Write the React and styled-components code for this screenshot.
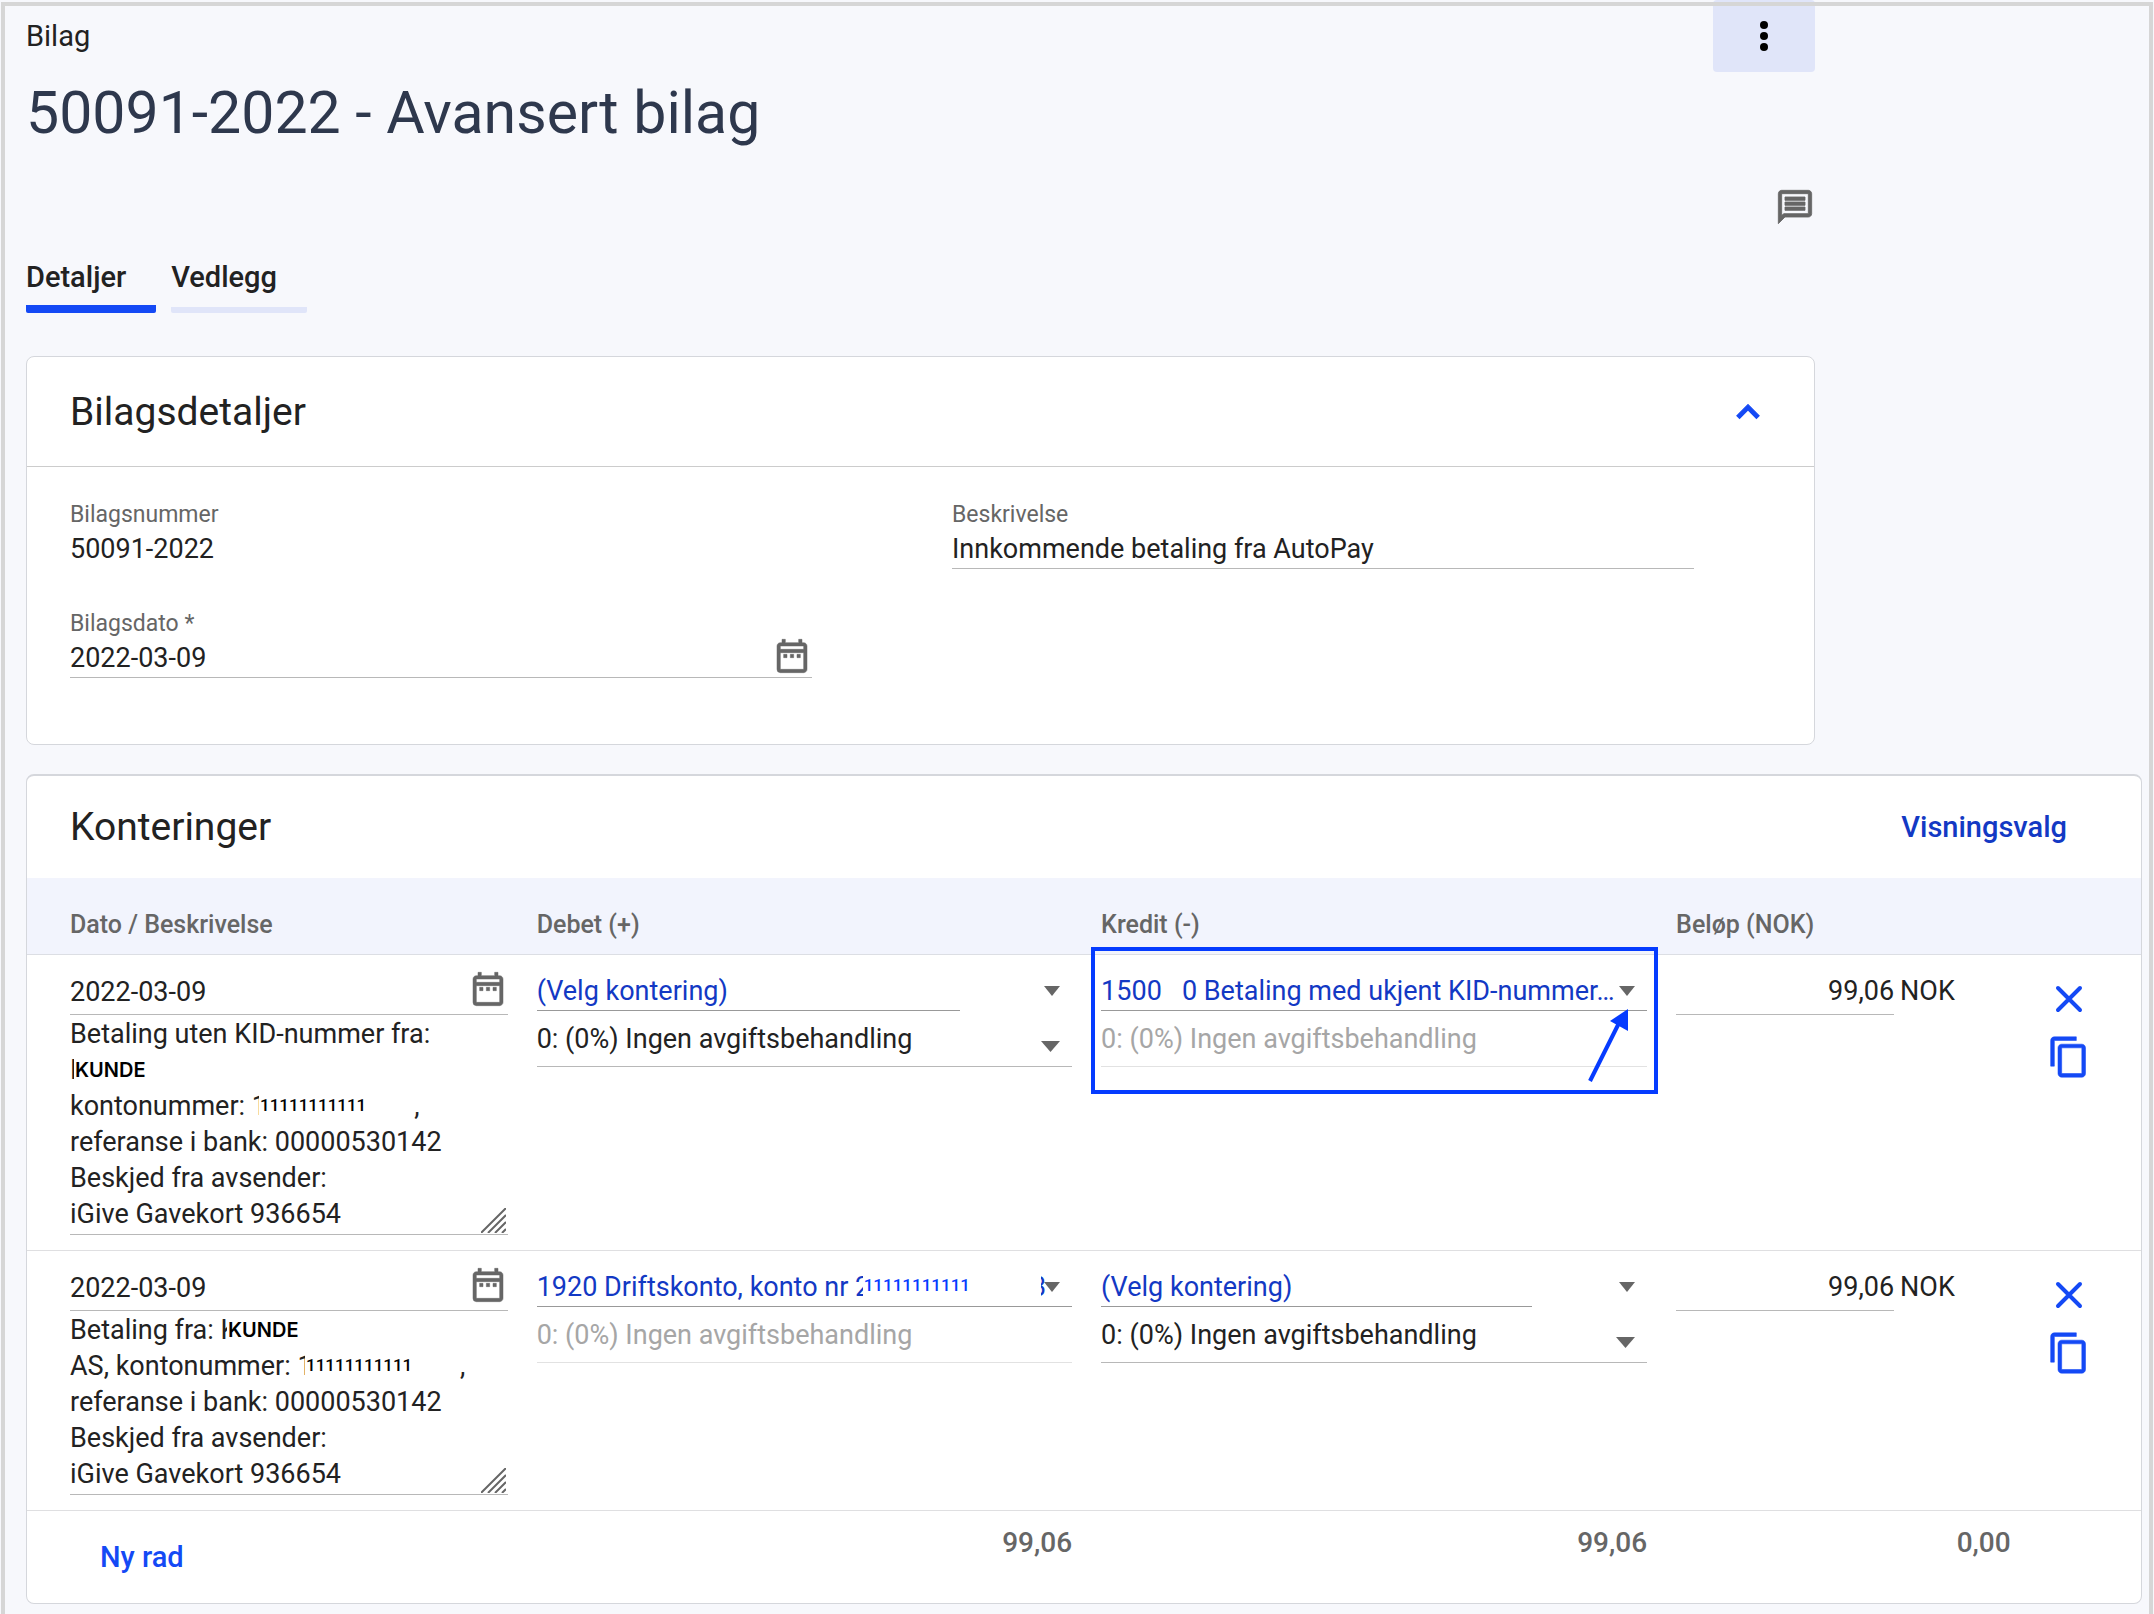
import { useState } from "react";
import styled, { createGlobalStyle, css } from "styled-components";
import {
    MdContentCopy,
    MdKeyboardArrowUp,
    MdOutlineDateRange,
    MdOutlineMessage,
} from "react-icons/md";

const GlobalStyle = createGlobalStyle`
    *, *::before, *::after {
        box-sizing: border-box;
    }
    body {
        margin: 0;
        background: #f7f8fc;
        color: #222;
        font-family: Roboto, "Liberation Sans", sans-serif;
        font-size: 27px;
    }
    button, input, select, textarea {
        margin: 0;
        padding: 0;
        border: 0;
        border-radius: 0;
        outline: 0;
        background: none;
        color: inherit;
        font: inherit;
    }
    button, select {
        cursor: pointer;
    }
`

const Page = styled.div`
    position: relative;
    min-height: 100vh;
    padding: 0 12px 9px 26px;
    &::after {
        content: "";
        position: absolute;
        inset: 2px 1px 0;
        border: 4px solid #d6d6d6;
        border-bottom: 0;
        pointer-events: none;
    }
`

const Column = styled.div`
    max-width: 1789px;
`

const Header = styled.header`
    display: flex;
    justify-content: space-between;
    align-items: flex-start;
`

const Heading = styled.div`
    padding-top: 18px;
`

const Crumb = styled.div`
    font-size: 29px;
    line-height: 36px;
`

const Title = styled.h1`
    margin: 27px 0 0;
    color: #2e384d;
    font-size: 59px;
    font-weight: 400;
    line-height: 64px;
`

const MenuButton = styled.button`
    width: 102px;
    height: 72px;
    border-radius: 4px;
    background: #e0e5f9;
    svg {
        display: block;
        margin: 0 auto;
    }
`

const Toolbar = styled.div`
    display: flex;
    justify-content: flex-end;
    margin-top: 42px;
`

const IconButton = styled.button`
    display: flex;
    color: ${(p) => (p.$blue ? "#1449f5" : "#666")};
    path[fill="none"] {
        stroke: none;
    }
`

const Tabs = styled.nav`
    display: flex;
    align-items: flex-start;
    gap: 15px;
    margin-top: 32px;
`

const Tab = styled.button`
    padding: 0 30px ${(p) => (p.$active ? 10 : 12)}px 0;
    border-bottom: ${(p) => (p.$active ? "8px solid #1449f5" : "6px solid #e0e5f9")};
    border-radius: 2px;
    font-size: 29px;
    font-weight: 500;
    line-height: 36px;
`

const Card = styled.section`
    margin-top: ${(p) => (p.$wide ? 29 : 43)}px;
    border: 1px solid #d5d7dc;
    border-top-width: ${(p) => (p.$wide ? 2 : 1)}px;
    border-radius: 8px;
    background: #fff;
    overflow: hidden;
`

const CardHeader = styled.div`
    display: flex;
    align-items: center;
    justify-content: space-between;
    height: ${(p) => (p.$line ? 110 : 102)}px;
    padding: 0 ${(p) => (p.$line ? 44 : 74)}px 0 43px;
    border-bottom: ${(p) => (p.$line ? "1px solid #ccc" : 0)};
`

const CardTitle = styled.h2`
    margin: 0;
    font-size: 39px;
    font-weight: 400;
    line-height: 44px;
`

const Fields = styled.div`
    display: grid;
    grid-template-columns: 1fr 1fr;
    gap: 41px 140px;
    padding: 34px 120px 66px 43px;
`

const Field = styled.div`
    display: flex;
    flex-direction: column;
`

const Label = styled.label`
    color: #666;
    font-size: 23px;
    line-height: 28px;
`

const Control = styled.div`
    display: flex;
    align-items: center;
    height: ${(p) => (p.$tall ? 48 : 40)}px;
    border-bottom: 1px solid ${(p) => (p.$plain ? "transparent" : "#b8b8b8")};
    input, output {
        flex: 1;
        min-width: 0;
        padding-top: ${(p) => (p.$tall ? 2 : 0)}px;
        line-height: 36px;
    }
    button {
        margin-bottom: 4px;
    }
`

const TextButton = styled.button`
    color: ${(p) => (p.$dark ? "#1339c4" : "#1449f5")};
    font-size: 29px;
    font-weight: 500;
    line-height: 36px;
`

const Table = styled.table`
    width: 100%;
    border-collapse: separate;
    border-spacing: 0;
    table-layout: fixed;
    th, td {
        padding: 12px 14px 15px 15px;
        text-align: left;
        vertical-align: top;
    }
    th:first-child, td:first-child {
        padding-left: 43px;
    }
    th {
        padding-top: 31px;
        padding-bottom: 13px;
        border-bottom: 1px solid #dcdee4;
        background: #f2f4fd;
        color: #666;
        font-size: 25px;
        font-weight: 500;
        line-height: 32px;
    }
    tbody td {
        position: relative;
        border-bottom: 1px solid #dfdfe1;
    }
    tfoot td {
        height: 92px;
        padding-top: 14px;
        color: #666;
        font-size: 28px;
        font-weight: 500;
        line-height: 36px;
        text-align: right;
    }
    tfoot td:first-child {
        padding-top: 28px;
        padding-left: 73px;
        text-align: left;
    }
`

const Description = styled.div`
    position: relative;
    textarea {
        display: block;
        width: 100%;
        padding: 1px 0 2px;
        box-sizing: content-box;
        border-bottom: 1px solid #b8b8b8;
        line-height: 36px;
        overflow: hidden;
        resize: none;
    }
`

const Grip = styled.svg`
    position: absolute;
    right: 2px;
    bottom: 2px;
    stroke: #666;
    stroke-width: 2;
`

// white strip with replacement text, laid over private data
const Patch = styled.span`
    position: absolute;
    top: ${(p) => p.$top}px;
    left: ${(p) => p.$left}px;
    width: ${(p) => (p.$width ? p.$width + "px" : "auto")};
    padding-left: 1px;
    background: #fff;
    color: ${(p) => (p.$blue ? "#053bff" : "#000")};
    font-size: 17px;
    font-weight: 500;
    line-height: 30px;
    ${(p) => p.$name && css`
        font-family: Inter, "Liberation Sans", sans-serif;
        font-size: 20px;
        font-weight: 600;
    `}
`

const Picker = styled.div`
    position: relative;
    height: ${(p) => (p.$vat ? 56 : 44)}px;
    select {
        display: block;
        width: ${(p) => (p.$short ? "79%" : "100%")};
        height: 100%;
        padding-top: ${(p) => (p.$vat ? 1 : 4)}px;
        border-bottom: 1px solid #999;
        color: #1339c4;
        appearance: none;
        opacity: 1;
        ${(p) => p.$vat && css`
            color: #222;
            border-color: #b8b8b8;
        `}
        &:disabled {
            color: #a6a6a6;
            border-color: #e2e2e2;
        }
    }
`

const Caret = styled.svg`
    position: absolute;
    top: ${(p) => (p.$vat ? 30 : 19)}px;
    right: 12px;
    fill: #666;
    pointer-events: none;
`

const Amount = styled.div`
    display: flex;
    gap: 6px;
    line-height: 49px;
    input {
        width: 218px;
        height: 48px;
        padding-top: 2px;
        border-bottom: 1px solid #b8b8b8;
        text-align: right;
    }
`

const Actions = styled.div`
    display: flex;
    flex-direction: column;
    align-items: center;
    gap: 14px;
    padding: 10px 28px 0 0;
`

const Marker = styled.svg`
    position: absolute;
    top: -8px;
    left: 5px;
    z-index: 1;
    width: calc(100% - 8px);
    height: 147px;
    border: 4px solid #053bff;
    overflow: visible;
    pointer-events: none;
`

const VAT = "0: (0%) Ingen avgiftsbehandling"
const NONE = "(Velg kontering)"

const ROWS = [
    {
        id: "r1",
        date: "2022-03-09",
        text: [
            "Betaling uten KID-nummer fra:",
            "K",
            "kontonummer: 1" + " ".repeat(22) + ",",
            "referanse i bank: 00000530142",
            "Beskjed fra avsender:",
            "iGive Gavekort 936654",
        ],
        patches: [
            { top: 40, left: 4, label: "KUNDE", name: true },
            { top: 75, left: 189, label: "11111111111" },
        ],
        debit: { account: NONE },
        credit: {
            account: "1500\u00a0\u00a0\u00a00 Betaling med ukjent KID-nummer…",
            marked: true,
        },
        amount: "99,06",
    },
    {
        id: "r2",
        date: "2022-03-09",
        text: [
            "Betaling fra: K",
            "AS, kontonummer: 1" + " ".repeat(22) + ",",
            "referanse i bank: 00000530142",
            "Beskjed fra avsender:",
            "iGive Gavekort 936654",
        ],
        patches: [
            { top: 4, left: 157, label: "KUNDE", name: true },
            { top: 39, left: 235, label: "11111111111" },
        ],
        debit: {
            account: "1920 Driftskonto, konto nr 2" + "\u00a0".repeat(24) + "3",
            patch: { top: 7, left: 326, width: 178, label: "11111111111" },
        },
        credit: { account: NONE },
        amount: "99,06",
    },
]

function DateControl({ id, value, tall, label }) {
    return (
        <Control $tall={tall}>
            <input id={id} defaultValue={value} aria-label={label} />
            <IconButton type="button" aria-label="Velg dato">
                <MdOutlineDateRange size={40} strokeWidth={0.3} />
            </IconButton>
        </Control>
    )
}

function Posting({ account, patch, marked, side }) {
    const empty = account === NONE
    return (
        <>
            <Picker $short={empty}>
                <select aria-label={side}>
                    <option>{account}</option>
                </select>
                {patch && (
                    <Patch $top={patch.top} $left={patch.left} $width={patch.width} $blue>
                        {patch.label}
                    </Patch>
                )}
                <Caret width="16" height="10" viewBox="0 0 16 10">
                    <path d="M0 0h16L8 10z" />
                </Caret>
            </Picker>
            <Picker $vat>
                <select aria-label={side + " avgift"} disabled={!empty}>
                    <option>{VAT}</option>
                </select>
                {empty && (
                    <Caret $vat width="19" height="11" viewBox="0 0 19 11">
                        <path d="M0 0h19L9.5 11z" />
                    </Caret>
                )}
            </Picker>
            {marked && (
                <Marker>
                    <svg x="100%" overflow="visible">
                        <path d="M-64 130L-34 70" stroke="#053bff" strokeWidth="4" />
                        <path d="M-26 58v22l-18-10z" fill="#053bff" />
                    </svg>
                </Marker>
            )}
        </>
    )
}

function Row({ row }) {
    return (
        <tr>
            <td>
                <DateControl tall label="Dato" value={row.date} />
                <Description>
                    <textarea
                        aria-label="Beskrivelse"
                        rows={row.text.length}
                        defaultValue={row.text.join("\n")}
                        spellCheck={false}
                    />
                    {row.patches.map((p) => (
                        <Patch key={p.label} $top={p.top} $left={p.left} $name={p.name}>
                            {p.label}
                        </Patch>
                    ))}
                    <Grip width="25" height="25" viewBox="0 0 25 25">
                        <path d="M0 25L25 0M7 25L25 7M14 25L25 14M21 25L25 21" />
                    </Grip>
                </Description>
            </td>
            <td>
                <Posting side="Debet" {...row.debit} />
            </td>
            <td>
                <Posting side="Kredit" {...row.credit} />
            </td>
            <td>
                <Amount>
                    <input id={row.id} defaultValue={row.amount} />
                    <label htmlFor={row.id}>NOK</label>
                </Amount>
            </td>
            <td>
                <Actions>
                    <IconButton $blue type="button" aria-label="Slett rad">
                        <svg width="44" height="44" viewBox="0 0 44 44">
                            <path
                                d="M11 11l22 22M33 11L11 33"
                                stroke="currentColor"
                                strokeWidth="4"
                                strokeLinecap="round"
                            />
                        </svg>
                    </IconButton>
                    <IconButton $blue type="button" aria-label="Kopier rad">
                        <MdContentCopy size={44} strokeWidth={0.3} />
                    </IconButton>
                </Actions>
            </td>
        </tr>
    )
}

export default function App() {
    const [tab, setTab] = useState("Detaljer")
    return (
        <Page>
            <GlobalStyle />
            <Column>
                <Header>
                    <Heading>
                        <Crumb>Bilag</Crumb>
                        <Title>50091-2022 - Avansert bilag</Title>
                    </Heading>
                    <MenuButton type="button" aria-label="Meny">
                        <svg width="8" height="32" viewBox="0 0 8 32">
                            <circle cx="4" cy="5" r="4" />
                            <circle cx="4" cy="16" r="4" />
                            <circle cx="4" cy="27" r="4" />
                        </svg>
                    </MenuButton>
                </Header>
                <Toolbar>
                    <IconButton type="button" aria-label="Kommentarer">
                        <MdOutlineMessage size={40} strokeWidth={0.5} />
                    </IconButton>
                </Toolbar>
                <Tabs>
                    {["Detaljer", "Vedlegg"].map((name) => (
                        <Tab
                            key={name}
                            type="button"
                            $active={tab === name}
                            onClick={() => setTab(name)}
                        >
                            {name}
                        </Tab>
                    ))}
                </Tabs>
                <Card>
                    <CardHeader $line>
                        <CardTitle>Bilagsdetaljer</CardTitle>
                        <IconButton $blue type="button" aria-label="Skjul">
                            <MdKeyboardArrowUp size={44} strokeWidth={0.7} />
                        </IconButton>
                    </CardHeader>
                    <Fields>
                        <Field>
                            <Label htmlFor="nummer">Bilagsnummer</Label>
                            <Control $plain>
                                <output id="nummer">50091-2022</output>
                            </Control>
                        </Field>
                        <Field>
                            <Label htmlFor="beskrivelse">Beskrivelse</Label>
                            <Control>
                                <input
                                    id="beskrivelse"
                                    defaultValue="Innkommende betaling fra AutoPay"
                                />
                            </Control>
                        </Field>
                        <Field>
                            <Label htmlFor="dato">Bilagsdato *</Label>
                            <DateControl id="dato" value="2022-03-09" />
                        </Field>
                    </Fields>
                </Card>
            </Column>
            <Card $wide>
                <CardHeader>
                    <CardTitle>Konteringer</CardTitle>
                    <TextButton $dark type="button">Visningsvalg</TextButton>
                </CardHeader>
                <Table>
                    <colgroup>
                        <col width="23.4%" />
                        <col width="26.7%" />
                        <col width="27.2%" />
                        <col width="17.2%" />
                        <col />
                    </colgroup>
                    <thead>
                        <tr>
                            <th>Dato / Beskrivelse</th>
                            <th>Debet (+)</th>
                            <th>Kredit (-)</th>
                            <th>Beløp (NOK)</th>
                            <th />
                        </tr>
                    </thead>
                    <tbody>
                        {ROWS.map((row) => (
                            <Row key={row.id} row={row} />
                        ))}
                    </tbody>
                    <tfoot>
                        <tr>
                            <td>
                                <TextButton type="button">Ny rad</TextButton>
                            </td>
                            <td>99,06</td>
                            <td>99,06</td>
                            <td>0,00</td>
                            <td />
                        </tr>
                    </tfoot>
                </Table>
            </Card>
        </Page>
    )
}
